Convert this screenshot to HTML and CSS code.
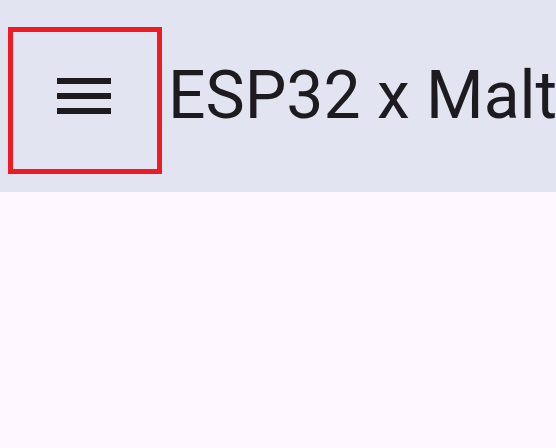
FILE: index.html
```html
<!DOCTYPE html>
<html>
<head>
<meta charset="utf-8">
<link rel="stylesheet" href="styles.css">
</head>
<body>
<header class="app-bar">
  <button class="nav-btn" aria-label="Menu">
    <svg class="menu-icon" viewBox="0 0 24 24" width="72" height="72">
      <path d="M3 18h18v-2H3v2zm0-5h18v-2H3v2zm0-7v2h18V6H3z" fill="#1d1b20"/>
    </svg>
  </button>
  <h1 class="title">ESP32 x Malt</h1>
  <div class="highlight"></div>
</header>
<main class="content"></main>
</body>
</html>
```

FILE: styles.css
```css
html, body {
  margin: 0;
  padding: 0;
  background: #fef7ff;
  width: 556px;
  height: 448px;
  overflow: hidden;
}
.app-bar {
  position: relative;
  height: 192px;
  background: #e2e5f1;
  display: flex;
  align-items: center;
  padding-left: 12px;
  overflow: hidden;
}
.nav-btn {
  width: 144px;
  height: 144px;
  border: none;
  background: transparent;
  padding: 0;
  display: flex;
  align-items: center;
  justify-content: center;
  flex: none;
}
.menu-icon {
  display: block;
}
.title {
  margin: 0 0 0 12px;
  font-family: Roboto, "Noto Sans", sans-serif;
  font-weight: 400;
  font-size: 66px;
  line-height: 66px;
  color: #1d1b20;
  white-space: nowrap;
}
.highlight {
  position: absolute;
  left: 8px;
  top: 27px;
  width: 144px;
  height: 137px;
  border: 5px solid #ed1c24;
}
.content {
  height: 256px;
}
```
